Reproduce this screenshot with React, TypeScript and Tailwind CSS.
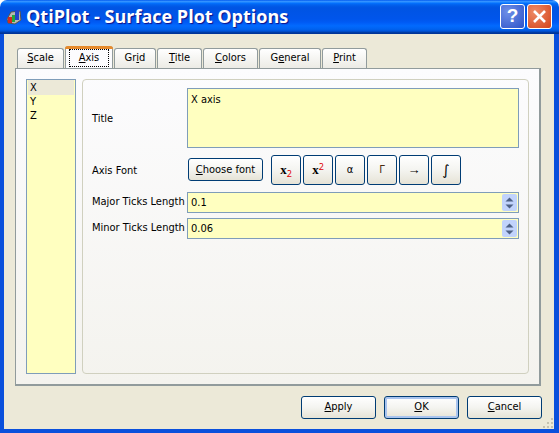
import React from "react"

const tabs = [
  { pre: "", key: "S", post: "cale", w: "w-[47px]" },
  { pre: "", key: "A", post: "xis", w: "w-[48px]", active: true },
  { pre: "Gr", key: "i", post: "d", w: "w-[42px]" },
  { pre: "", key: "T", post: "itle", w: "w-[45px]" },
  { pre: "", key: "C", post: "olors", w: "w-[55px]" },
  { pre: "G", key: "e", post: "neral", w: "w-[62px]" },
  { pre: "", key: "P", post: "rint", w: "w-[45px]" },
]

function Tab({ pre, key_, post, w, active }: { pre: string, key_: string, post: string, w: string, active?: boolean }) {
  if (active) {
    return (
      <div className={`${w} h-[22px] -mb-px z-10 flex flex-col rounded-t-[3px] border-x border-[#919b9c] bg-[#fcfcfe]`}>
        <div className="h-[3px] -mx-px rounded-t-[3px] bg-[#e68b2c] border-t border-[#e68b2c]" />
        <div className="flex-1 flex items-center justify-center">
          <span className="w-[40px] text-center border border-dotted border-black h-[18px] leading-[15px] -mt-[1px]">{pre}<u>{key_}</u>{post}</span>
        </div>
      </div>
    )
  }
  return (
    <div className={`${w} h-[20px] mt-[2px] flex items-center justify-center rounded-t-[3px] border border-b-0 border-[#919b9c] bg-gradient-to-b from-white to-[#ecebe5]`}>
      <span>{pre}<u>{key_}</u>{post}</span>
    </div>
  )
}

function DlgButton({ pre, key_, post, w, h, focus }: { pre?: string, key_: string, post: string, w: string, h: string, focus?: boolean }) {
  return (
    <div className={`${w} ${h} flex items-center justify-center rounded-[3px] border border-[#003c74] bg-gradient-to-b from-white via-[#f4f4f0] to-[#e6e3d6] ${focus ? "shadow-[inset_0_0_0_2px_#a9c4ee]" : ""}`}>
      <span>{pre}<u>{key_}</u>{post}</span>
    </div>
  )
}

function SymButton({ children }: { children: React.ReactNode }) {
  return (
    <div className="w-[30px] h-[30px] flex items-center justify-center rounded-[3px] border border-[#003c74] bg-gradient-to-b from-white via-[#f4f4f0] to-[#e6e3d6]">
      {children}
    </div>
  )
}

function SpinBox({ value }: { value: string }) {
  return (
    <div className="flex-1 h-[21px] flex items-center border border-[#7f9db9] bg-[#ffffc0] pl-[3px] pr-px">
      <span className="flex-1 pt-px">{value}</span>
      <div className="w-[15px] h-[17px] rounded-[2px] bg-[#c1d3fb] flex flex-col items-center justify-center gap-[2px]">
        <svg width="9" height="5" viewBox="0 0 9 5"><path d="M4.5 0.5 L8.5 4.5 H0.5 Z" fill="#4d6185" /></svg>
        <svg width="9" height="5" viewBox="0 0 9 5"><path d="M4.5 4.5 L8.5 0.5 H0.5 Z" fill="#4d6185" /></svg>
      </div>
    </div>
  )
}

export default function App() {
  return (
    <div className="w-[559px] h-[433px] flex flex-col bg-white overflow-hidden text-[11px] text-black font-['DejaVu_Sans_Condensed','DejaVu_Sans',sans-serif]">
      <div className="h-[34px] shrink-0 flex items-center rounded-t-[7px] pl-[5px] pr-[7px] pb-[1px] bg-[linear-gradient(#0058ee,#3593ff_4%,#288eff_6%,#127dff_8%,#036ffc_10%,#0262ee_14%,#0057e5_20%,#0054e3_24%,#0055eb_56%,#005bf5_66%,#026afe_76%,#0062ef_86%,#0052d6_92%,#0040ab_94%,#003092)]">
        <svg width="18" height="18" viewBox="0 0 18 18" className="shrink-0">
          <path d="M2 11 L6 4 L15 3 L16 12 L10 16 L3 15 Z" fill="#b9b7b0" stroke="#55534f" strokeWidth="1" />
          <rect x="3" y="9" width="4" height="6" fill="#d42a20" />
          <rect x="7" y="7" width="3" height="7" fill="#25a83a" />
          <rect x="10" y="2" width="4" height="10" fill="#2244c8" />
        </svg>
        <span className="ml-[3px] flex-1 text-white font-bold text-[18px] font-['Open_Sans',sans-serif] [text-shadow:1px_1px_1px_#0f1089]">QtiPlot - Surface Plot Options</span>
        <div className="flex gap-[2px]">
          <div className="w-[25px] h-[25px] rounded-[3px] border border-white flex items-center justify-center bg-[radial-gradient(circle_at_30%_30%,#6e8fe8,#2c52c8)] text-white font-bold text-[19px] font-['Liberation_Sans',sans-serif]">?</div>
          <div className="w-[25px] h-[25px] rounded-[3px] border border-white flex items-center justify-center bg-[radial-gradient(circle_at_30%_30%,#ee8a66,#d3441a)]">
            <svg width="15" height="15" viewBox="0 0 15 15"><path d="M2 2 L13 13 M13 2 L2 13" stroke="#fff" strokeWidth="2.6" /></svg>
          </div>
        </div>
      </div>

      <div className="flex-1 flex flex-col min-h-0 border-l-4 border-r-[5px] border-b-4 border-[#0a50dc] bg-[#ece9d8] pl-[11px] pr-[1px] pt-[12px] relative">
        <div className="flex gap-px pl-[2px] w-[526px]">
          {tabs.map(t => (
            <Tab key={t.key} pre={t.pre} key_={t.key} post={t.post} w={t.w} active={t.active} />
          ))}
        </div>
        <div className="w-[526px] h-[318px] shrink-0 flex gap-[6px] border border-[#919b9c] border-r-2 border-b-2 bg-gradient-to-b from-[#fcfcfe] to-[#f4f3ee] p-[10px]">
          <div className="w-[50px] shrink-0 border border-[#7f9db9] bg-[#ffffc0] px-[3px] leading-[14px]">
            <div className="-mx-[2px] px-[2px] pt-px bg-[#ece9d8]">X</div>
            <div>Y</div>
            <div>Z</div>
          </div>
          <div className="flex-1 rounded-[4px] border border-[#d0d0bf] pt-[8px] pl-[9px] pr-[9px]">
            <div className="flex items-center gap-[8px]">
              <span className="w-[87px] pt-[3px]">Title</span>
              <div className="flex-1 h-[60px] border border-[#7f9db9] bg-[#ffffc0] pl-[3px] pt-[3px]">X axis</div>
            </div>
            <div className="flex items-center mt-[7px] h-[30px]">
              <span className="w-[96px] pt-[3px]">Axis Font</span>
              <div className="self-start mt-[3px]">
                <div className="w-[75px] h-[23px] flex items-center justify-center pt-[2px] rounded-[3px] border border-[#003c74] bg-gradient-to-b from-white via-[#f4f4f0] to-[#e6e3d6]">
                  <span><u>C</u>hoose font</span>
                </div>
              </div>
              <div className="flex gap-[2px] ml-[8px]">
                <SymButton>
                  <span className="font-['Liberation_Serif',serif] font-bold text-[13px]">x<sub className="text-[#e00000] font-['Noto_Sans',sans-serif] font-normal text-[9px]">2</sub></span>
                </SymButton>
                <SymButton>
                  <span className="font-['Liberation_Serif',serif] font-bold text-[13px]">x<sup className="text-[#e00000] font-['Noto_Sans',sans-serif] font-normal text-[9px]">2</sup></span>
                </SymButton>
                <SymButton><span>α</span></SymButton>
                <SymButton><span className="text-[#4a2c10]">Γ</span></SymButton>
                <SymButton><span className="font-['Liberation_Serif',serif] text-[13px]">→</span></SymButton>
                <SymButton><span className="font-['DejaVu_Sans',sans-serif] text-[14px]">∫</span></SymButton>
              </div>
            </div>
            <div className="flex items-center gap-[8px] mt-[7px]">
              <span className="w-[87px] whitespace-nowrap">Major Ticks Length</span>
              <SpinBox value="0.1" />
            </div>
            <div className="flex items-center gap-[8px] mt-[5px]">
              <span className="w-[87px] whitespace-nowrap">Minor Ticks Length</span>
              <SpinBox value="0.06" />
            </div>
          </div>
        </div>
        <div className="w-[527px] flex justify-end gap-[8px] mt-[10px]">
          <DlgButton key_="A" post="pply" w="w-[75px]" h="h-[23px]" />
          <DlgButton key_="O" post="K" w="w-[75px]" h="h-[23px]" focus />
          <DlgButton key_="C" post="ancel" w="w-[75px]" h="h-[23px]" />
        </div>
        <svg width="12" height="12" viewBox="0 0 12 12" className="absolute right-0 bottom-0">
          <path d="M9 1h2v2H9zM5 5h2v2H5zM9 5h2v2H9zM1 9h2v2H1zM5 9h2v2H5zM9 9h2v2H9z" fill="#c5c2b0" />
        </svg>
      </div>
    </div>
  )
}
